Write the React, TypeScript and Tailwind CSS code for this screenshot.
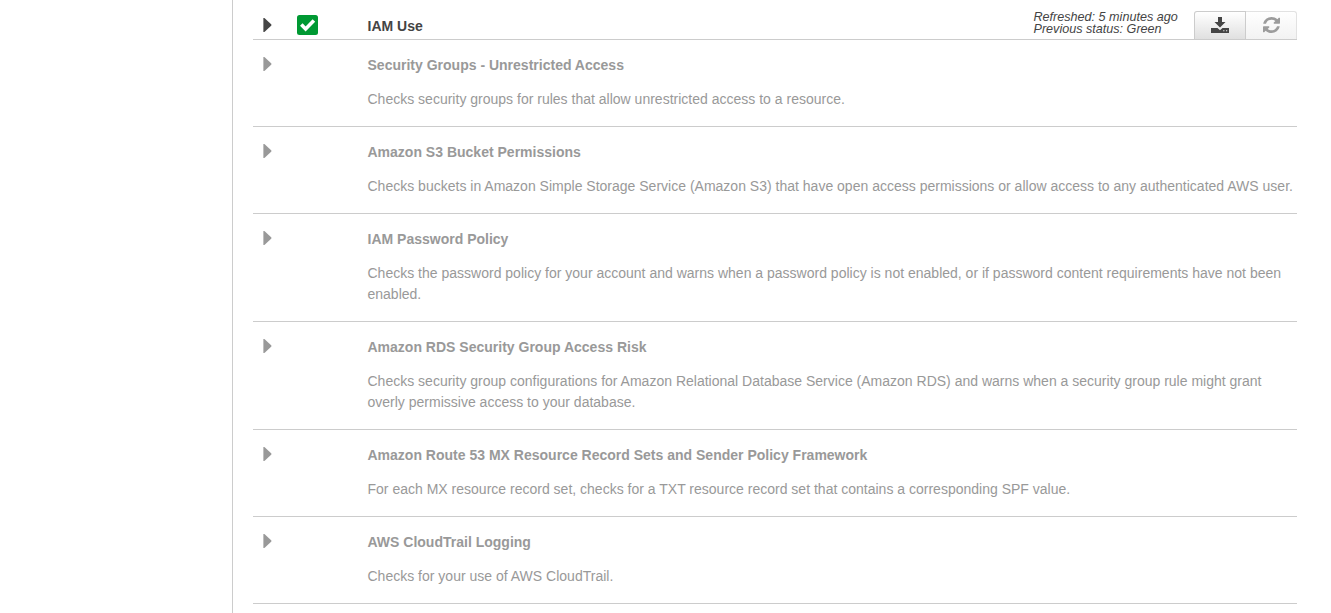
const checks = [
  ["Security Groups - Unrestricted Access", "Checks security groups for rules that allow unrestricted access to a resource."],
  ["Amazon S3 Bucket Permissions", "Checks buckets in Amazon Simple Storage Service (Amazon S3) that have open access permissions or allow access to any authenticated AWS user."],
  ["IAM Password Policy", "Checks the password policy for your account and warns when a password policy is not enabled, or if password content requirements have not been enabled."],
  ["Amazon RDS Security Group Access Risk", "Checks security group configurations for Amazon Relational Database Service (Amazon RDS) and warns when a security group rule might grant overly permissive access to your database."],
  ["Amazon Route 53 MX Resource Record Sets and Sender Policy Framework", "For each MX resource record set, checks for a TXT resource record set that contains a corresponding SPF value."],
  ["AWS CloudTrail Logging", "Checks for your use of AWS CloudTrail."],
];

function Caret({ className }: { className: string }) {
  return (
    <svg viewBox="0 0 9 14" className={"h-3.5 w-[9px] shrink-0 " + className}>
      <path d="M0.4 0h1l7 6.5v1L1.4 14h-1z" fill="currentColor" />
    </svg>
  );
}

function GreenCheck() {
  return (
    <svg viewBox="0 0 21 20" className="mt-[15px] ml-[25px] h-5 w-[21px] shrink-0">
      <rect width="21" height="20" rx="2.5" fill="#093" />
      <path d="M4.3 9.6 8.6 13.9 16.9 5.6" fill="none" stroke="white" strokeWidth="3.6" />
    </svg>
  );
}

function DownloadIcon() {
  return (
    <svg viewBox="0 0 18 16" className="h-4 w-[18px]" fill="currentColor">
      <path d="M7 0h4v5h3.5L9 10.5 3.5 5H7z" />
      <path d="M0 11h6.5L9 13.2 11.5 11H18v5H0zM12.2 13.2v1h1.2v-1zM15 13.2v1h1.2v-1z" fillRule="evenodd" />
    </svg>
  );
}

function RefreshIcon() {
  return (
    <svg viewBox="0 0 1536 1536" className="h-4 w-[17px]" preserveAspectRatio="none" fill="currentColor">
      <path d="M1511 928q0 5-1 7-64 268-268 434.500t-478 166.500q-146 0-282.500-55t-243.500-157l-129 129q-19 19-45 19t-45-19-19-45v-448q0-26 19-45t45-19h448q26 0 45 19t19 45-19 45l-137 137q71 66 161 102t187 36q134 0 250-65t186-179q11-17 53-117 8-23 30-23h192q13 0 22.500 9.500t9.500 22.500zm25-800v448q0 26-19 45t-45 19h-448q-26 0-45-19t-19-45 19-45l138-138q-148-137-349-137-134 0-250 65t-186 179q-11 17-53 117-8 23-30 23h-199q-13 0-22.500-9.500t-9.500-22.500v-7q65-268 270-434.500t480-166.500q146 0 284 55.500t245 156.500l130-129q19-19 45-19t45 19 19 45z" />
    </svg>
  );
}

export default function App() {
  return (
    <div className="flex h-[613px] overflow-hidden bg-white font-['Liberation_Sans',Arial,sans-serif] text-sm leading-[21px] text-[#999]">
      <aside className="w-[233px] shrink-0 border-r border-[#ccc]" />
      <main className="ml-5 w-[1044px]">
        <div className="flex h-10 border-b border-[#ccc] text-[#444]">
          <Caret className="mt-[18px] ml-2.5" />
          <GreenCheck />
          <h2 className="mt-4 ml-[49.5px] font-bold">IAM Use</h2>
          <div className="mt-[11px] ml-auto w-[160.5px] text-[12.6px] leading-3 whitespace-nowrap italic">
            <p>Refreshed: 5 minutes ago</p>
            <p>Previous status: Green</p>
          </div>
          <div className="mt-[11px] flex h-[28px] w-[103px]">
            <button className="flex w-[52px] items-center justify-center rounded-tl-[3px] border border-b-0 border-[#ccc] bg-linear-to-b from-white to-[#e0e0e0] pb-px"><DownloadIcon /></button>
            <button className="flex flex-1 items-center justify-center rounded-tr-[3px] border border-b-0 border-l-0 border-[#e2e2e2] bg-linear-to-b from-white to-[#f2f2f2] pb-px text-[#9c9c9c]"><RefreshIcon /></button>
          </div>
        </div>
        {checks.map(([title, text]) => (
          <section key={title} className="flex border-b border-[#ccc] pt-[15px] pb-4">
            <Caret className="mt-0.5 ml-2.5" />
            <div className="ml-[95.5px] flex-1 tracking-[0.005px]">
              <h3 className="font-bold">{title}</h3>
              <p className="mt-[13px]">{text}</p>
            </div>
          </section>
        ))}
      </main>
    </div>
  );
}
